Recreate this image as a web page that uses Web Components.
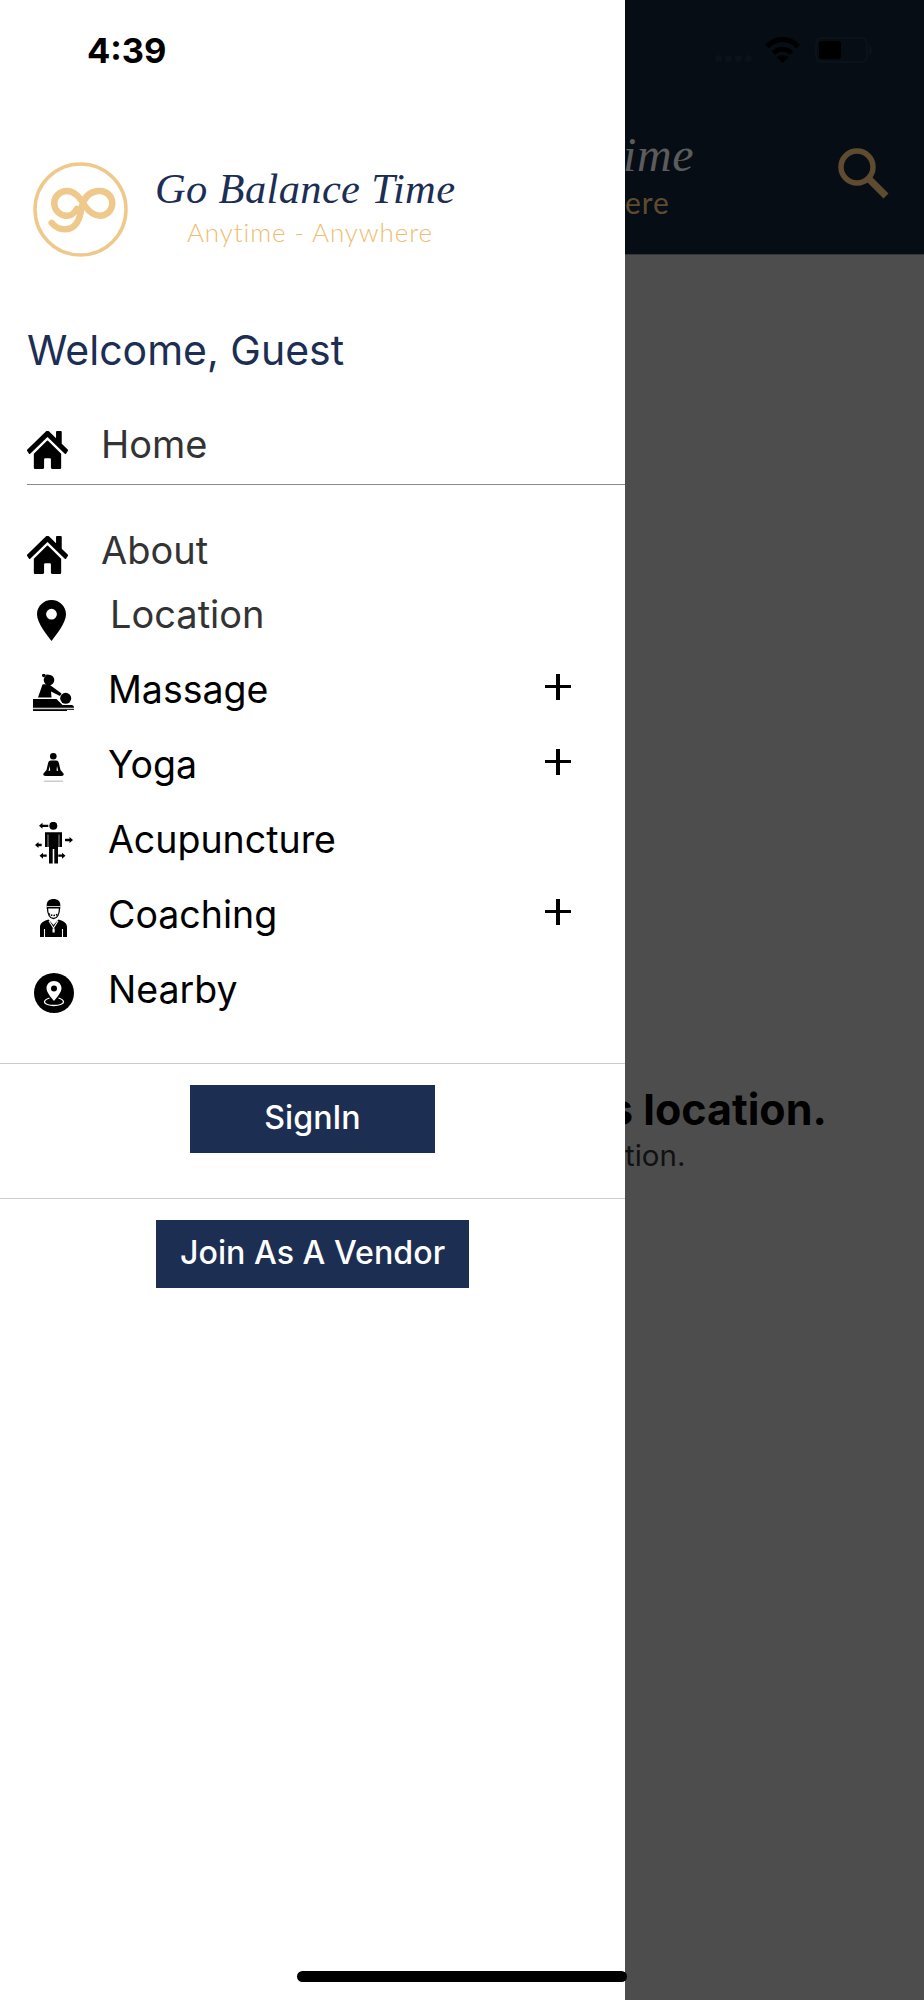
<!DOCTYPE html>
<html>
<head>
<meta charset="utf-8">
<style>
    html, body { margin: 0; padding: 0; background: #4d4d4d; }
    body { width: 924px; height: 2000px; overflow: hidden; position: relative; font-family: Inter, "Liberation Sans", sans-serif; }
    app-shell { width: 924px; height: 2000px; }
</style>
</head>
<body>

<app-shell>
    <side-drawer slot="drawer">
        <drawer-logo></drawer-logo>
        <h-welcome>Welcome, Guest</h-welcome>
        <drawer-item icon="home" kind="first" tone="grey">Home</drawer-item>
        <drawer-item icon="home" kind="short" tone="grey">About</drawer-item>
        <drawer-item icon="pin" kind="short" tone="grey" inset="9">Location</drawer-item>
        <drawer-item icon="massage" plus style="margin-top:4px">Massage</drawer-item>
        <drawer-item icon="yoga" plus>Yoga</drawer-item>
        <drawer-item icon="acupuncture">Acupuncture</drawer-item>
        <drawer-item icon="coaching" plus>Coaching</drawer-item>
        <drawer-item icon="nearby">Nearby</drawer-item>
        <drawer-button style="margin-top:36px" label="SignIn" width="245"></drawer-button>
        <drawer-button label="Join As A Vendor" width="313"></drawer-button>
    </side-drawer>
    <behind-page slot="page"></behind-page>
</app-shell>
<home-bar></home-bar>

<script>
// iconos del menu
const ICONS = {
    home: `<svg width="41" height="38" viewBox="0 32 576 448" preserveAspectRatio="none"><path fill="#000" d="M280.37 148.26L96 300.11V464a16 16 0 0 0 16 16l112.06-.29a16 16 0 0 0 15.92-16V368a16 16 0 0 1 16-16h64a16 16 0 0 1 16 16v95.64a16 16 0 0 0 16 16.05L464 480a16 16 0 0 0 16-16V300L295.67 148.26a12.19 12.19 0 0 0-15.3 0zM571.6 251.47L488 182.56V44.05a12 12 0 0 0-12-12h-56a12 12 0 0 0-12 12v72.61L318.47 43a48 48 0 0 0-61 0L4.34 251.47a12 12 0 0 0-1.6 16.9l25.5 31A12 12 0 0 0 45.15 301l235.22-193.74a12.19 12.19 0 0 1 15.3 0L530.9 301a12 12 0 0 0 16.9-1.6l25.5-31a12 12 0 0 0-1.7-16.93z"/></svg>`,
    pin: `<svg style="margin-left:10px" width="29" height="41" viewBox="0 0 29 41"><path fill="#000" fill-rule="evenodd" d="M14.500 0C6.500 0 0 6.300 0 14.200 0 23 10 35 14.500 41 19 35 29 23 29 14.200 29 6.300 22.500 0 14.500 0zM14.500 8.800a5.400 5.400 0 1 1 0 10.800 5.400 5.400 0 0 1 0-10.800z"/></svg>`,
    massage: `<svg width="41" height="37" viewBox="0 0 41 37"><circle cx="16" cy="6" r="5.300"/><circle cx="10.700" cy="1.500" r="1.700"/><path d="M10.500 1l5-.5v2z"/><path d="M9.500 10.500c2-.5 5-.5 7.500.5L28.500 19.500 27 22 18 17.500l.500 6H5z"/><circle cx="32.700" cy="24.300" r="5.500"/><path d="M0 25H23.500L29.500 31H38.500C40 31 41 32 41 33.700H0z"/><rect y="34.800" width="41" height="1"/><rect y="36" width="34" height="1"/></svg>`,
    yoga: `<svg width="21" height="29" viewBox="0 0 21 29"><circle cx="10.300" cy="3.300" r="3.300"/><path d="M8 7.500h5c2 0 2.500 1 3 3l1.500 6.500 3 3.500c.8 1.200-.5 2.500-2 2.500H2.500c-1.500 0-2.800-1.300-2-2.500l3-3.500L5 10.500c.5-2 1-3 3-3z"/><path fill="#fff" d="M6.700 13l-1.200 5 1.700-.5zM14 13l1.200 5-1.700-.5z"/><rect x="1" y="27.500" width="19" height="1.500" fill="#ccc"/></svg>`,
    acupuncture: `<svg width="38" height="42" viewBox="0 0 38 42"><circle cx="18.300" cy="3.800" r="4"/><path d="M10 10.300h17V25h-2.700V12.500h-.6V25H23V41.500H19.300V27H17.700V41.500H14V25H13.300V12.500H12.700V25H10z"/><g stroke="#000" stroke-width="2.300"><path d="M6 3.800h7.300M2 23h4.700M30 18h5.700M7 33.700h4.700M23.300 33.700h5"/></g><path d="M4 3.800l3.500-3v6zM0 23l3.500-3v6zM38 18l-3.500-3v6zM4.500 33.700l3.500-3v6zM30.500 33.700l-3.500-3v6z"/></svg>`,
    coaching: `<svg width="29" height="38" viewBox="0 0 29 38"><path d="M7.700 6C7.700 2 10.500 0 14.500 0S21.300 2 21.300 6v3.500H7.700z"/><path fill="#fff" d="M7.700 7h13.600v.8H7.700z"/><path fill="none" stroke="#000" stroke-width="1.300" d="M8.500 9c0 6.500 2.500 10.500 6 10.500s6-4 6-10.500"/><path fill="none" stroke="#000" stroke-width="1.500" stroke-dasharray="1.500 1" d="M10 14.500c1 2.500 8 2.500 9 0"/><path d="M9.500 20.500L14.500 26l5-5.500c4 1 8.500 3 8.500 7.500V38H1V28c0-4.500 4.500-6.500 8.500-7.500z"/><path fill="none" stroke="#fff" stroke-width="1.100" d="M10 22l4.500 7 4.500-7M5.500 30v8M23.500 30v8"/><path fill="#fff" d="M13.500 29.500h2.200v4h-2.200z"/></svg>`,
    nearby: `<svg width="40" height="40" viewBox="0 0 40 40"><circle cx="20" cy="20" r="20"/><path fill="#fff" fill-rule="evenodd" d="M20 8c-4.300 0-7.500 3.200-7.500 7.200 0 4 4.500 9 7.500 12.800 3-3.800 7.500-8.800 7.500-12.800C27.500 11.200 24.300 8 20 8zm0 4.500a3 3 0 1 1 0 6 3 3 0 0 1 0-6z"/><path fill="none" stroke="#fff" stroke-width="1.300" d="M15.500 25C12 26 10.500 27.500 10.500 29c0 2 4.500 3.500 9.500 3.500s9.500-1.500 9.500-3.500c0-1.500-1.500-3-5-4"/></svg>`
};

class AppShell extends HTMLElement {
    constructor() {
        super();
        this.shadow = this.attachShadow({ mode: 'open' });
    }
    connectedCallback() {
        this.shadow.innerHTML = `
        <style>
            :host { display: flex; }
            .drawer { flex: 0 0 625px; width: 625px; background: #fff; }
            .page { flex: 0 0 299px; width: 299px; overflow: hidden; }
        </style>
        <div class="drawer"><slot name="drawer"></slot></div>
        <div class="page"><slot name="page"></slot></div>
        `;
    }
}

class SideDrawer extends HTMLElement {
    constructor() {
        super();
        this.shadow = this.attachShadow({ mode: 'open' });
    }
    connectedCallback() {
        this.shadow.innerHTML = `
        <style>
            :host { display: block; }
            .status {
                height: 101px;
                box-sizing: border-box;
                padding-left: 87px;
                display: flex;
                align-items: center;
                font: 700 34.500px Inter, "Liberation Sans", sans-serif;
                color: #000;
            }
        </style>
        <div class="status">4:39</div>
        <slot></slot>
        `;
    }
}

class DrawerLogo extends HTMLElement {
    constructor() {
        super();
        this.shadow = this.attachShadow({ mode: 'open' });
    }
    connectedCallback() {
        this.shadow.innerHTML = `
        <style>
            :host { display: flex; height: 219px; box-sizing: border-box; padding: 61px 0 0 33px; align-items: flex-start; }
            svg { flex: none; }
            .text { margin-left: 27px; width: 320px; }
            .name {
                font: italic 400 42.500px/42px "Liberation Serif", serif;
                color: #1c2e54;
                white-space: nowrap;
                margin-top: 6px;
                letter-spacing: 0.35px;
            }
            .tag {
                font: 300 26px/30px Lato, sans-serif;
                color: #eebd70;
                margin: 7px 0 0 32px;
                white-space: nowrap;
                letter-spacing: 0.9px;
            }
        </style>
        <svg width="95" height="95" viewBox="0 0 95 95" fill="none" stroke="#efc98c">
            <circle cx="47.500" cy="47.500" r="45.500" stroke-width="3.500"/>
            <path stroke-width="6.500" stroke-linecap="round" d="M18.700 61C23 66 28 67.300 32 67.300 41 67.300 46 60 47.700 50 49.500 37 55 29 67 29 74 29 79.300 34.500 79.300 41.300 79.300 48 74 53.700 67 53.700 60 53.700 55.500 49 52 44 47 35 41 29 33.700 29 26.800 29 21.200 34.500 21.200 41.300 21.200 48 26.800 53.800 33.700 53.800 38 53.800 41.500 51 43.800 47"/>
        </svg>
        <div class="text">
            <div class="name">Go Balance Time</div>
            <div class="tag">Anytime - Anywhere</div>
        </div>
        `;
    }
}

class HWelcome extends HTMLElement {
    constructor() {
        super();
        this.shadow = this.attachShadow({ mode: 'open' });
    }
    connectedCallback() {
        this.shadow.innerHTML = `
        <style>
            :host {
                display: flex;
                align-items: center;
                height: 60px;
                padding-left: 27px;
                font: 400 41px Inter, "Liberation Sans", sans-serif;
                color: #1c2e54;
            }
        </style>
        <slot></slot>
        `;
    }
}

class DrawerItem extends HTMLElement {
    constructor() {
        super();
        this.shadow = this.attachShadow({ mode: 'open' });
    }
    connectedCallback() {
        const kind = this.getAttribute('kind');
        const grey = this.getAttribute('tone') === 'grey';
        const inset = this.getAttribute('inset') || 0;
        const iconName = this.getAttribute('icon');
        // los tres primeros van alineados distinto al resto
        const hostCss = kind === 'first'
            ? 'height:78px;margin:26px 0 33px 27px;border-bottom:1px solid #8a8a8a;'
            : kind === 'short' ? 'height:65px;padding-left:27px;' : 'height:75px;padding-left:33px;';
        const lift = inset > 0 ? 4 : (kind ? 2 : 0);

        this.shadow.innerHTML = `
        <style>
            :host {
                display: flex;
                align-items: center;
                font: 400 ${kind ? 38 : 37.5}px Inter, "Liberation Sans", sans-serif;
                color: ${grey ? '#333' : '#000'};
                ${hostCss}
            }
            .icon { flex: none; box-sizing: border-box; height: 45px; display: flex; align-items: center; margin-top: ${kind ? 9 : 6}px; }
            .icon.menu { width: 75px; padding-right: 34px; justify-content: center; }
            .icon.top { width: 74px; }
            .label { flex: 1; margin-left: ${inset}px; padding-bottom: ${lift}px; white-space: nowrap; }
            .plus { flex: none; width: 26px; height: 26px; margin: -6px 54px 0 0; position: relative; }
            .plus::before, .plus::after { content: ''; position: absolute; background: #000; }
            .plus::before { left: 0; right: 0; top: 11.250px; height: 3.500px; }
            .plus::after { top: 0; bottom: 0; left: 11.250px; width: 3.500px; }
        </style>
        <div class="icon ${kind ? 'top' : 'menu'}">${ICONS[iconName]}</div>
        <div class="label"><slot></slot></div>
        ${this.hasAttribute('plus') ? '<div class="plus"></div>' : ''}
        `;
    }
}

class DrawerButton extends HTMLElement {
    constructor() {
        super();
        this.shadow = this.attachShadow({ mode: 'open' });
    }
    connectedCallback() {
        this.shadow.innerHTML = `
        <style>
            :host { display: flex; flex-direction: column; align-items: center; border-top: 1px solid #ccc; padding: 21px 0 45px; }
            .btn {
                width: ${this.getAttribute('width')}px;
                height: 68px;
                box-sizing: border-box;
                padding-bottom: 3px;
                background: #1c2e52;
                color: #fff;
                display: flex;
                align-items: center;
                justify-content: center;
                font: 500 32.200px Inter, "Liberation Sans", sans-serif;
                white-space: nowrap;
            }
        </style>
        <div class="btn">${this.getAttribute('label')}</div>
        `;
    }
}

class BehindPage extends HTMLElement {
    constructor() {
        super();
        this.shadow = this.attachShadow({ mode: 'open' });
    }
    connectedCallback() {
        this.shadow.innerHTML = `
        <style>
            :host { display: block; height: 2000px; background: #4d4d4d; }
            .head { height: 255px; box-sizing: border-box; background: #060d15; border-bottom: 1px solid #33373c; position: relative; display: flex; }
            .bar { position: absolute; top: 37px; left: 90px; display: flex; align-items: flex-end; gap: 13px; }
            .dots { display: flex; gap: 3px; height: 26px; align-items: flex-end; }
            .dots i { width: 7px; height: 7px; margin-bottom: 1px; border-radius: 50%; background: #0b1219; }
            .wifi { margin-right: 2px; }
            .battery { width: 53px; height: 26px; box-sizing: border-box; border: 2px solid #0b1219; border-radius: 7px; padding: 2px; position: relative; }
            .battery b { display: block; width: 22px; height: 18px; background: #000; border-radius: 3px; }
            .battery::after { content: ''; position: absolute; right: -6px; top: 6px; width: 3px; height: 10px; background: #0b1219; border-radius: 0 3px 3px 0; }
            .brand { padding-top: 134px; }
            .brand .a { font: italic 400 48px/42px "Liberation Serif", serif; color: #5c5c5c; letter-spacing: .6px; margin-left: -2px; }
            .brand .b { font: 400 30px/34px Lato, sans-serif; color: #5f4b30; letter-spacing: .9px; margin-top: 9px; }
            .search { position: absolute; left: 213px; top: 147px; }
            .msg { margin-top: 831px; white-space: nowrap; color: #000; }
            .msg .t { font: 700 43px/46px Inter, "Liberation Sans", sans-serif; margin-left: -16px; }
            .msg .s { font: 400 29.500px/32px Inter, "Liberation Sans", sans-serif; color: #111; margin-top: 7px; }
        </style>
        <div class="head">
            <div class="bar">
                <div class="dots"><i></i><i></i><i></i><i></i></div>
                <svg class="wifi" width="35" height="26" viewBox="0 0 35 26" fill="none" stroke="#000" stroke-width="5">
                    <path d="M2 9.500C11.500 0 23.500 0 33 9.500"/>
                    <path d="M8.500 16C14 11 21 11 26.500 16"/>
                    <path fill="#000" stroke="none" d="M11.500 20.500C15 17.500 20 17.500 23.500 20.500L17.500 26z"/>
                </svg>
                <div class="battery"><b></b></div>
            </div>
            <div class="brand">
                <div class="a">ime</div>
                <div class="b">ere</div>
            </div>
            <svg class="search" width="56" height="56" viewBox="0 0 56 56" fill="none" stroke="#5f4b30">
                <circle cx="19" cy="20" r="16" stroke-width="5.500"/>
                <path d="M31 32L48 49" stroke-width="7"/>
            </svg>
        </div>
        <div class="msg">
            <div class="t">s location.</div>
            <div class="s">tion.</div>
        </div>
        `;
    }
}

class HomeBar extends HTMLElement {
    constructor() {
        super();
        this.shadow = this.attachShadow({ mode: 'open' });
    }
    connectedCallback() {
        this.shadow.innerHTML = `
        <style>
            :host { display: block; position: absolute; left: 297px; top: 1971px; width: 330px; height: 11px; background: #000; border-radius: 6px; }
        </style>
        `;
    }
}

customElements.define('app-shell', AppShell);
customElements.define('side-drawer', SideDrawer);
customElements.define('drawer-logo', DrawerLogo);
customElements.define('h-welcome', HWelcome);
customElements.define('drawer-item', DrawerItem);
customElements.define('drawer-button', DrawerButton);
customElements.define('behind-page', BehindPage);
customElements.define('home-bar', HomeBar);
</script>
</body>
</html>
